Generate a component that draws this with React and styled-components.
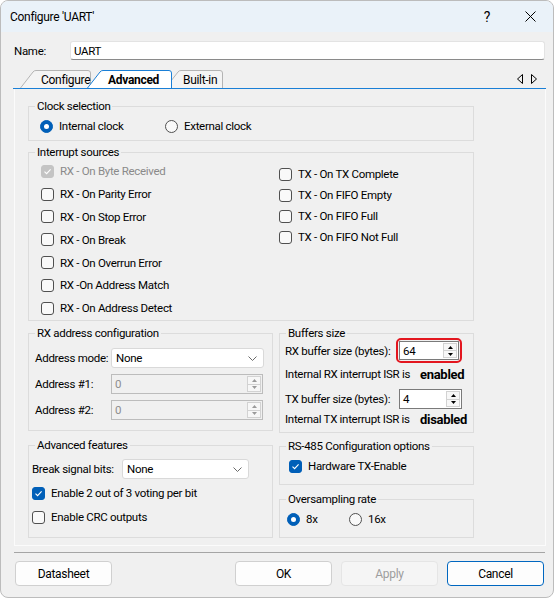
import React from "react";
import styled, { createGlobalStyle } from "styled-components";

const GlobalStyle = createGlobalStyle`
  html, body {
    margin: 0;
    padding: 0;
    background: #ffffff;
  }
  body {
    font-family: Roboto, "Liberation Sans", Arial, sans-serif;
    font-size: 11.5px;
    letter-spacing: -0.3px;
    color: #000000;
    white-space: nowrap;
  }
  * {
    box-sizing: border-box;
  }
`;

const Window = styled.div`
  width: 554px;
  height: 598px;
  border: 1px solid #bcbcbc;
  border-radius: 8px;
  overflow: hidden;
  background: #f0f0f0;
  display: flex;
  flex-direction: column;
`;

const TitleBar = styled.div`
  height: 31px;
  flex: none;
  display: flex;
  align-items: center;
  padding-left: 9px;
  background: #eaf2f9;
  font-size: 12px;
`;

const Caption = styled.div`
  flex: 1;
`;

const CaptionButton = styled.div`
  width: 46px;
  height: 31px;
  display: flex;
  align-items: center;
  justify-content: center;
  font-size: 14px;
  margin-right: ${(p) => p.$mr || 0}px;
`;

const Body = styled.div`
  flex: 1;
  display: flex;
  flex-direction: column;
  padding: 0 7px 0 12px;
`;

const NameRow = styled.div`
  display: flex;
  align-items: center;
  margin-top: 9px;
  height: 19px;
`;

const NameLabel = styled.div`
  width: 57px;
  padding-left: 1px;
`;

const NameInput = styled.div`
  flex: 1;
  height: 19px;
  margin-right: 1px;
  display: flex;
  align-items: center;
  padding-left: 3px;
  background: #ffffff;
  border: 1px solid #e3e3e3;
  border-bottom-color: #8a8a8a;
  border-radius: 3px;
`;

const TabBar = styled.div`
  margin-top: 10px;
  height: 19px;
  display: flex;
  align-items: flex-end;
  padding-left: 7px;
  border-bottom: 1px solid #1a7fd6;
`;

const TabItem = styled.div`
  position: relative;
  z-index: ${(p) => (p.$active ? 2 : 1)};
  width: ${(p) => p.$w}px;
  height: 18px;
  margin-left: ${(p) => p.$ml || 0}px;
  padding: 1px 0 0 ${(p) => p.$pl}px;
  display: flex;
  align-items: center;
  font-size: 12px;
  font-weight: ${(p) => (p.$active ? 700 : 400)};
`;

const TabShape = styled.svg`
  position: absolute;
  left: 0;
  top: 0;
  z-index: -1;
`;

const TabText = styled.span`
  position: relative;
`;

const TabArrows = styled.div`
  margin-left: auto;
  height: 18px;
  display: flex;
  align-items: center;
  gap: 8px;
  padding-right: 9px;
`;

const Panel = styled.div`
  margin-left: 1px;
  height: 457px;
  border: 1px solid #fbfbfb;
  border-top: none;
  padding: 17px 0 0 13px;
`;

const Groups = styled.div`
  width: 446px;
  display: flex;
  flex-direction: column;
`;

const GroupBox = styled.div`
  height: ${(p) => p.$h}px;
  margin-top: ${(p) => p.$mt || 0}px;
  border: 1px solid #dcdcdc;
`;

const GroupTitle = styled.div`
  width: fit-content;
  margin: -8px 0 0 6px;
  padding: 0 2px;
  line-height: 14px;
  background: #f0f0f0;
`;

const OptionRow = styled.div`
  display: flex;
  align-items: center;
  height: 14px;
  margin-top: ${(p) => p.$mt || 0}px;
  padding-left: ${(p) => p.$pl || 0}px;
`;

const Option = styled.div`
  display: flex;
  align-items: center;
  gap: 6px;
  width: ${(p) => (p.$w ? `${p.$w}px` : "auto")};
  height: ${(p) => p.$h || 14}px;
  flex: none;
  color: ${(p) => (p.$disabled ? "#8a8a8a" : "#000000")};
`;

const Box = styled.span`
  width: 13px;
  height: 13px;
  flex: none;
  display: inline-flex;
  align-items: center;
  justify-content: center;
  border-radius: 3px;
  border: 1px solid
    ${(p) => (p.$checked ? (p.$disabled ? "#c4c4c4" : "#005fb8") : "#505050")};
  background: ${(p) =>
    p.$checked ? (p.$disabled ? "#c4c4c4" : "#005fb8") : "#f9f9f9"};
`;

const Dot = styled.span`
  width: 13px;
  height: 13px;
  flex: none;
  display: inline-flex;
  align-items: center;
  justify-content: center;
  border-radius: 50%;
  border: 1px solid ${(p) => (p.$on ? "#005fb8" : "#505050")};
  background: ${(p) => (p.$on ? "#005fb8" : "#f9f9f9")};
  &::after {
    content: "";
    display: ${(p) => (p.$on ? "block" : "none")};
    width: 5px;
    height: 5px;
    border-radius: 50%;
    background: #ffffff;
  }
`;

const InterruptGrid = styled.div`
  display: grid;
  grid-template-columns: 238px 1fr;
  padding-left: 12px;
`;

const Column = styled.div`
  display: flex;
  flex-direction: column;
  padding-top: ${(p) => p.$pt || 0}px;
`;

const Bottom = styled.div`
  display: grid;
  grid-template-columns: 245px 195px;
  column-gap: 6px;
  margin-top: 12px;
`;

const Stack = styled.div`
  display: flex;
  flex-direction: column;
`;

const FormRows = styled.div`
  display: flex;
  flex-direction: column;
  gap: ${(p) => p.$gap || 0}px;
  margin-top: ${(p) => p.$mt || 0}px;
  padding-left: ${(p) => p.$pl || 0}px;
`;

const FormRow = styled.div`
  display: flex;
  align-items: center;
  height: ${(p) => p.$h || 20}px;
  margin-top: ${(p) => p.$mt || 0}px;
`;

const FormLabel = styled.div`
  width: ${(p) => p.$w}px;
  flex: none;
`;

const Field = styled.div`
  width: ${(p) => p.$w}px;
  height: ${(p) => p.$h || 20}px;
  flex: none;
  display: flex;
  align-items: center;
  padding-left: 3px;
  background: ${(p) => (p.$disabled ? "#f0f0f0" : "#ffffff")};
  border: 1px solid ${(p) => (p.$disabled ? "#bcbcbc" : "#7a7a7a")};
  color: ${(p) => (p.$disabled ? "#8d8d8d" : "#000000")};
`;

const SelectBox = styled.div`
  width: ${(p) => p.$w}px;
  height: 20px;
  flex: none;
  display: flex;
  align-items: center;
  padding: 0 6px 0 4px;
  background: #ffffff;
  border: 1px solid #d9d9d9;
  border-radius: 3px;
`;

const FieldText = styled.span`
  flex: 1;
`;

const Spin = styled.div`
  width: 14px;
  height: calc(100% - 2px);
  margin-right: 1px;
  display: flex;
  flex-direction: column;
  border: 1px solid #d2d2d2;
  background: #f7f7f7;
`;

const SpinHalf = styled.div`
  flex: 1;
  display: flex;
  align-items: center;
  justify-content: center;
  & + & {
    border-top: 1px solid #d2d2d2;
  }
`;

const Highlight = styled.div`
  margin-left: -3px;
  padding: 1px;
  border: 2px solid #e3161f;
  border-radius: 5px;
`;

const Strong = styled.span`
  font-weight: 700;
  font-size: 13px;
`;

const Footer = styled.div`
  display: flex;
  flex-direction: column;
`;

const Separator = styled.div`
  height: 1px;
  margin: 6px 1px 0 1px;
  background: #a5a5a5;
`;

const ButtonRow = styled.div`
  display: flex;
  gap: 9px;
  margin: 8px 2px 0 2px;
`;

const Button = styled.div`
  width: 97px;
  height: 25px;
  display: flex;
  align-items: center;
  justify-content: center;
  border-radius: 4px;
  font-size: 12px;
  background: ${(p) => (p.$disabled ? "#f5f5f5" : "#fdfdfd")};
  border: 1px solid
    ${(p) => (p.$primary ? "#0067c0" : p.$disabled ? "#e5e5e5" : "#d0d0d0")};
  color: ${(p) => (p.$disabled ? "#9d9d9d" : "#000000")};
  margin-left: ${(p) => (p.$push ? "auto" : "0")};
`;

const Check = ({ checked, disabled }) => (
  <Box $checked={checked} $disabled={disabled}>
    {checked && (
      <svg width="9" height="9" viewBox="0 0 9 9">
        <polyline
          points="1.5,4.6 3.6,6.7 7.6,2.4"
          fill="none"
          stroke="#ffffff"
          strokeWidth="1.1"
        />
      </svg>
    )}
  </Box>
);

const CheckOption = ({ label, checked, disabled, h }) => (
  <Option $h={h} $disabled={disabled}>
    <Check checked={checked} disabled={disabled} />
    <span>{label}</span>
  </Option>
);

const RadioOption = ({ label, on, w }) => (
  <Option $w={w}>
    <Dot $on={on} />
    <span>{label}</span>
  </Option>
);

const Chevron = () => (
  <svg width="9" height="5" viewBox="0 0 9 5">
    <polyline points="0.5,0.5 4.5,4.5 8.5,0.5" fill="none" stroke="#6a6a6a" />
  </svg>
);

const Tri = ({ up, color }) => (
  <svg width="5" height="3" viewBox="0 0 5 3">
    <polygon points={up ? "0,3 2.5,0 5,3" : "0,0 5,0 2.5,3"} fill={color} />
  </svg>
);

const SpinField = ({ value, w, h, disabled }) => {
  const c = disabled ? "#9a9a9a" : "#000000";
  return (
    <Field $w={w} $h={h} $disabled={disabled}>
      <FieldText>{value}</FieldText>
      <Spin>
        <SpinHalf>
          <Tri up color={c} />
        </SpinHalf>
        <SpinHalf>
          <Tri color={c} />
        </SpinHalf>
      </Spin>
    </Field>
  );
};

const Select = ({ value, w }) => (
  <SelectBox $w={w}>
    <FieldText>{value}</FieldText>
    <Chevron />
  </SelectBox>
);

const Tab = ({ label, w, pl, ml, active }) => {
  const s = 13;
  const d = `M0.5 18 L${s} 2 Q${s + 1} 0.5 ${s + 3} 0.5 L${w - 3} 0.5 Q${
    w - 0.5
  } 0.5 ${w - 0.5} 3 L${w - 0.5} 18`;
  return (
    <TabItem $w={w} $pl={pl} $ml={ml} $active={active}>
      <TabShape width={w} height="19" viewBox={`0 0 ${w} 19`}>
        <path
          d={`${d} Z`}
          fill={active ? "#ffffff" : "#f4f4f4"}
          stroke="none"
        />
        <path
          d={d}
          fill="none"
          stroke={active ? "#1a7fd6" : "#b4b4b4"}
          strokeWidth="1"
        />
      </TabShape>
      <TabText>{label}</TabText>
    </TabItem>
  );
};

const leftInterrupts = [
  { label: "RX - On Byte Received", checked: true, disabled: true },
  { label: "RX - On Parity Error" },
  { label: "RX - On Stop Error" },
  { label: "RX - On Break" },
  { label: "RX - On Overrun Error" },
  { label: "RX -On Address Match" },
  { label: "RX - On Address Detect" },
];

const rightInterrupts = [
  "TX - On TX Complete",
  "TX - On FIFO Empty",
  "TX - On FIFO Full",
  "TX - On FIFO Not Full",
];

export default function App() {
  return (
    <>
      <GlobalStyle />
      <Window>
        <TitleBar>
          <Caption>Configure 'UART'</Caption>
          <CaptionButton $mr={-3}>?</CaptionButton>
          <CaptionButton>
            <svg width="11" height="11" viewBox="0 0 11 11">
              <path d="M0.5 0.5 L10.5 10.5 M10.5 0.5 L0.5 10.5" stroke="#000" strokeWidth="1" />
            </svg>
          </CaptionButton>
        </TitleBar>

        <Body>
          <NameRow>
            <NameLabel>Name:</NameLabel>
            <NameInput>UART</NameInput>
          </NameRow>

          <TabBar>
            <Tab label="Configure" w={71} pl={21} ml={0} />
            <Tab label="Advanced" w={85} pl={21} ml={-4} active />
            <Tab label="Built-in" w={58} pl={18} ml={-7} />
            <TabArrows>
              <svg width="6" height="10" viewBox="0 0 6 10">
                <polygon points="5.5,0.5 0.5,5 5.5,9.5" fill="none" stroke="#000" />
              </svg>
              <svg width="6" height="10" viewBox="0 0 6 10">
                <polygon points="0.5,0.5 5.5,5 0.5,9.5" fill="none" stroke="#000" />
              </svg>
            </TabArrows>
          </TabBar>

          <Panel>
            <Groups>
              <GroupBox $h={35}>
                <GroupTitle>Clock selection</GroupTitle>
                <OptionRow $mt={6} $pl={11}>
                  <RadioOption label="Internal clock" on w={125} />
                  <RadioOption label="External clock" />
                </OptionRow>
              </GroupBox>

              <GroupBox $h={169} $mt={11}>
                <GroupTitle>Interrupt sources</GroupTitle>
                <InterruptGrid>
                  <Column $pt={1}>
                    {leftInterrupts.map((it) => (
                      <CheckOption
                        key={it.label}
                        label={it.label}
                        checked={it.checked}
                        disabled={it.disabled}
                        h={22.8}
                      />
                    ))}
                  </Column>
                  <Column $pt={4.5}>
                    {rightInterrupts.map((label) => (
                      <CheckOption key={label} label={label} h={21} />
                    ))}
                  </Column>
                </InterruptGrid>
              </GroupBox>

              <Bottom>
                <Stack>
                  <GroupBox $h={98}>
                    <GroupTitle>RX address configuration</GroupTitle>
                    <FormRows $mt={8} $gap={6} $pl={6}>
                      <FormRow>
                        <FormLabel $w={76}>Address mode:</FormLabel>
                        <Select value="None" w={153} />
                      </FormRow>
                      <FormRow>
                        <FormLabel $w={76}>Address #1:</FormLabel>
                        <SpinField value="0" w={152} disabled />
                      </FormRow>
                      <FormRow>
                        <FormLabel $w={76}>Address #2:</FormLabel>
                        <SpinField value="0" w={152} disabled />
                      </FormRow>
                    </FormRows>
                  </GroupBox>

                  <GroupBox $h={93} $mt={14}>
                    <GroupTitle>Advanced features</GroupTitle>
                    <FormRows $pl={3}>
                      <FormRow $mt={7}>
                        <FormLabel $w={90}>Break signal bits:</FormLabel>
                        <Select value="None" w={127} />
                      </FormRow>
                      <FormRow $h={24} $mt={2}>
                        <CheckOption label="Enable 2 out of 3 voting per bit" checked h={24} />
                      </FormRow>
                      <FormRow $h={24}>
                        <CheckOption label="Enable CRC outputs" h={24} />
                      </FormRow>
                    </FormRows>
                  </GroupBox>
                </Stack>

                <Stack>
                  <GroupBox $h={100}>
                    <GroupTitle>Buffers size</GroupTitle>
                    <FormRows $pl={5}>
                      <FormRow $h={25} $mt={-2}>
                        <FormLabel $w={114}>RX buffer size (bytes):</FormLabel>
                        <Highlight>
                          <SpinField value="64" w={60} h={19} />
                        </Highlight>
                      </FormRow>
                      <FormRow $h={22}>
                        <FormLabel $w={135}>Internal RX interrupt ISR is</FormLabel>
                        <Strong>enabled</Strong>
                      </FormRow>
                      <FormRow $mt={4}>
                        <FormLabel $w={114}>TX buffer size (bytes):</FormLabel>
                        <SpinField value="4" w={63} h={20} />
                      </FormRow>
                      <FormRow>
                        <FormLabel $w={135}>Internal TX interrupt ISR is</FormLabel>
                        <Strong>disabled</Strong>
                      </FormRow>
                    </FormRows>
                  </GroupBox>

                  <GroupBox $h={39} $mt={13}>
                    <GroupTitle>RS-485 Configuration options</GroupTitle>
                    <FormRows $pl={9}>
                      <FormRow $mt={3}>
                        <CheckOption label="Hardware TX-Enable" checked />
                      </FormRow>
                    </FormRows>
                  </GroupBox>

                  <GroupBox $h={39} $mt={14}>
                    <GroupTitle>Oversampling rate</GroupTitle>
                    <FormRows $pl={7}>
                      <FormRow $mt={3}>
                        <RadioOption label="8x" on w={62} />
                        <RadioOption label="16x" />
                      </FormRow>
                    </FormRows>
                  </GroupBox>
                </Stack>
              </Bottom>
            </Groups>
          </Panel>

          <Footer>
            <Separator />
            <ButtonRow>
              <Button>Datasheet</Button>
              <Button $push>OK</Button>
              <Button $disabled>Apply</Button>
              <Button $primary>Cancel</Button>
            </ButtonRow>
          </Footer>
        </Body>
      </Window>
    </>
  );
}
